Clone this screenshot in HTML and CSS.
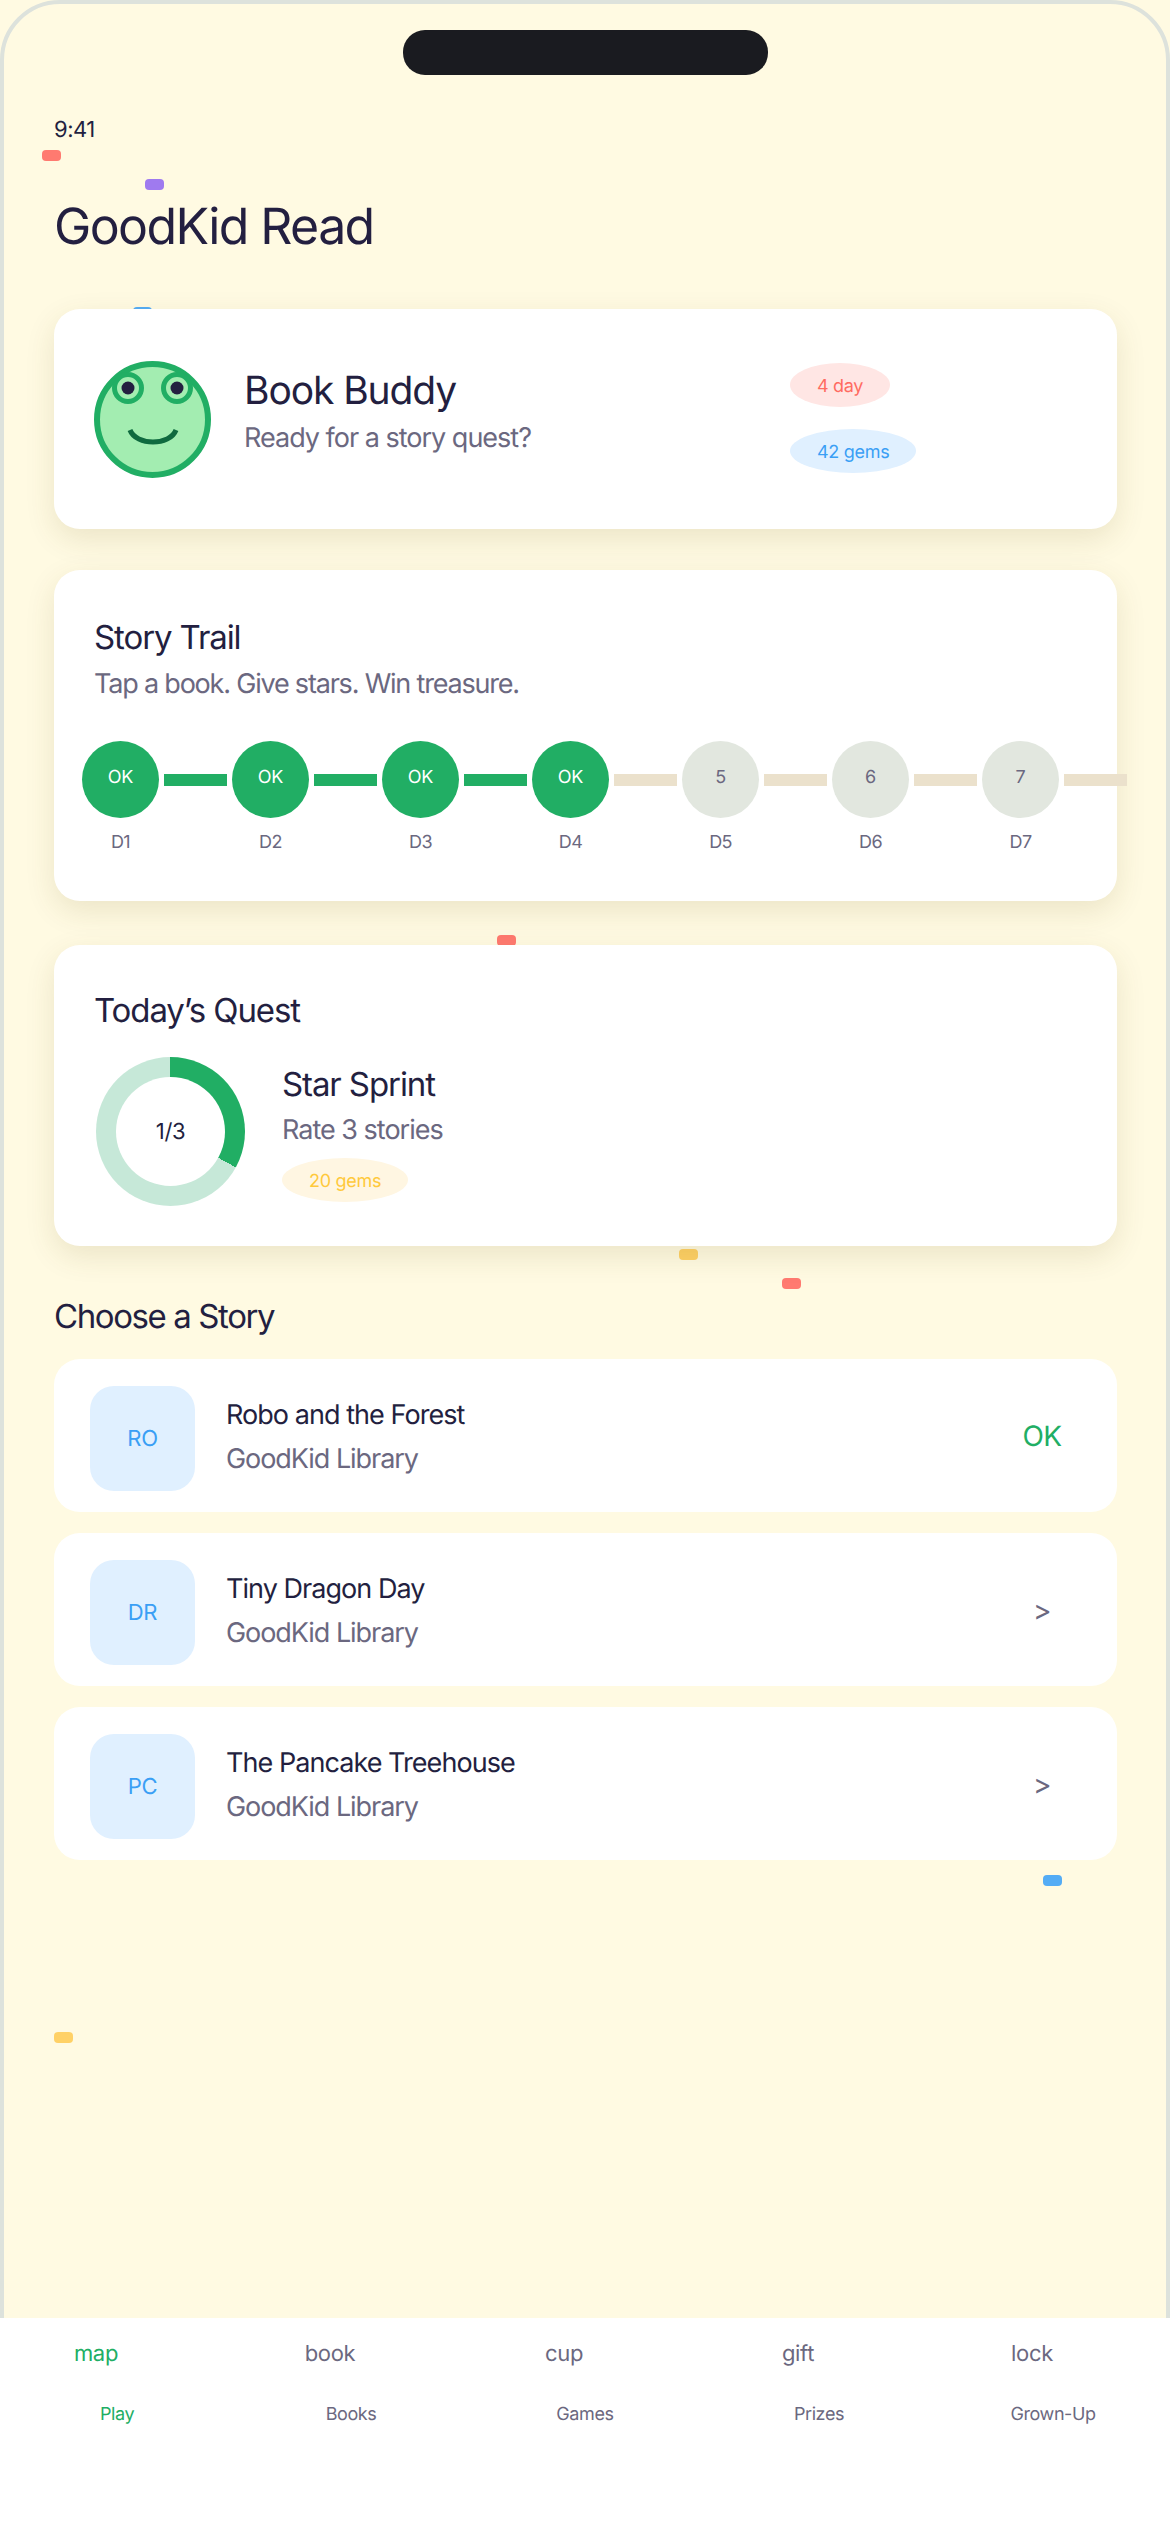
FILE: index.html
```html
<!DOCTYPE html>
<html lang="en">
<head>
<meta charset="utf-8">
<title>GoodKid Read</title>
<link rel="stylesheet" href="styles.css">
</head>
<body>
<div class="phone">
  <i class="bit bit-red b1"></i>
  <i class="bit bit-purple b2"></i>
  <i class="bit bit-blue b3"></i>
  <i class="bit bit-red b4"></i>
  <i class="bit bit-yellow b5"></i>
  <i class="bit bit-red b6"></i>
  <i class="bit bit-blue b7"></i>
  <i class="bit bit-yellow b8"></i>

  <main class="screen">
    <div class="island"></div>
    <div class="time">9:41</div>
    <h1 class="title">GoodKid Read</h1>

    <section class="card buddy">
      <div class="frog">
        <svg viewBox="0 0 117 117" width="117" height="117">
          <circle cx="58.5" cy="58.5" r="55.5" fill="#a3edb1" stroke="#21ae64" stroke-width="6"/>
          <circle cx="34" cy="27" r="13.5" fill="#a3edb1" stroke="#21ae64" stroke-width="5"/>
          <circle cx="83" cy="27" r="13.5" fill="#a3edb1" stroke="#21ae64" stroke-width="5"/>
          <circle cx="34" cy="27" r="6.5" fill="#231f40"/>
          <circle cx="83" cy="27" r="6.5" fill="#231f40"/>
          <path d="M36 69 C42 85 76 85 82 69" fill="none" stroke="#0f6a3f" stroke-width="5"/>
        </svg>
      </div>
      <div class="buddy-text">
        <h2 class="buddy-name">Book Buddy</h2>
        <p class="sub">Ready for a story quest?</p>
      </div>
      <div class="pills">
        <span class="pill pill-red">4 day</span>
        <span class="pill pill-blue">42 gems</span>
      </div>
    </section>

    <section class="card trail">
      <h2 class="head">Story Trail</h2>
      <p class="sub trail-sub">Tap a book. Give stars. Win treasure.</p>
      <div class="track">
        <div class="step"><div class="dot dot-done">OK</div><span class="day">D1</span></div><div class="link link-done"></div>
        <div class="step"><div class="dot dot-done">OK</div><span class="day">D2</span></div><div class="link link-done"></div>
        <div class="step"><div class="dot dot-done">OK</div><span class="day">D3</span></div><div class="link link-done"></div>
        <div class="step"><div class="dot dot-done">OK</div><span class="day">D4</span></div><div class="link"></div>
        <div class="step"><div class="dot">5</div><span class="day">D5</span></div><div class="link"></div>
        <div class="step"><div class="dot">6</div><span class="day">D6</span></div><div class="link"></div>
        <div class="step"><div class="dot">7</div><span class="day">D7</span></div><div class="link"></div>
      </div>
    </section>

    <section class="card quest">
      <h2 class="head">Today’s Quest</h2>
      <div class="quest-body">
        <div class="ring"><span class="ring-core">1/3</span></div>
        <div class="quest-text">
          <h3 class="head quest-name">Star Sprint</h3>
          <p class="sub quest-sub">Rate 3 stories</p>
          <span class="pill pill-yellow">20 gems</span>
        </div>
      </div>
    </section>

    <h2 class="head section-title">Choose a Story</h2>
    <div class="stories">
      <article class="story">
        <div class="tile">RO</div>
        <div class="story-text"><h3 class="story-name">Robo and the Forest</h3><p class="story-by">GoodKid Library</p></div>
        <span class="mark mark-ok">OK</span>
      </article>
      <article class="story">
        <div class="tile">DR</div>
        <div class="story-text"><h3 class="story-name">Tiny Dragon Day</h3><p class="story-by">GoodKid Library</p></div>
        <span class="mark">&gt;</span>
      </article>
      <article class="story">
        <div class="tile">PC</div>
        <div class="story-text"><h3 class="story-name">The Pancake Treehouse</h3><p class="story-by">GoodKid Library</p></div>
        <span class="mark">&gt;</span>
      </article>
    </div>
  </main>

  <nav class="tabs">
    <div class="tab tab-on"><span class="tab-icon">map</span><span class="tab-label">Play</span></div>
    <div class="tab"><span class="tab-icon">book</span><span class="tab-label">Books</span></div>
    <div class="tab"><span class="tab-icon">cup</span><span class="tab-label">Games</span></div>
    <div class="tab"><span class="tab-icon">gift</span><span class="tab-label">Prizes</span></div>
    <div class="tab"><span class="tab-icon">lock</span><span class="tab-label">Grown-Up</span></div>
  </nav>
</div>
</body>
</html>
```
FILE: styles.css
```css
* { box-sizing: border-box; margin: 0; padding: 0; }
html, body { background: #fffae2; }
body { font-family: Inter, "Liberation Sans", sans-serif; color: #231f40; text-rendering: geometricPrecision; }

.phone {
  position: relative;
  width: 1170px;
  height: 2532px;
  display: flex;
  flex-direction: column;
  overflow: hidden;
}
.phone::before {
  content: "";
  position: absolute;
  inset: 0;
  border: 4px solid #dde2dc;
  border-radius: 60px;
}

.bit { position: absolute; width: 19px; height: 11px; border-radius: 4px; }
.bit-red { background: #ff7a70; }
.bit-purple { background: #9f7aef; }
.bit-blue { background: #54acf5; }
.bit-yellow { background: #ffd166; }
.b1 { left: 42px; top: 150px; }
.b2 { left: 145px; top: 179px; }
.b3 { left: 133px; top: 307px; }
.b4 { left: 497px; top: 935px; }
.b5 { left: 679px; top: 1249px; }
.b6 { left: 782px; top: 1278px; }
.b7 { left: 1043px; top: 1875px; }
.b8 { left: 54px; top: 2032px; }

.screen {
  position: relative;
  flex: 1;
  padding: 30px 53px 0 54px;
  display: flex;
  flex-direction: column;
}
.island {
  align-self: center;
  width: 365px;
  height: 45px;
  border-radius: 22px;
  background: #1a1b20;
}
.time { margin-top: 42px; height: 25px; font-size: 22px; line-height: 26px; letter-spacing: -0.5px; }
.title { margin-top: 54px; height: 61px; font-size: 50px; line-height: 63px; font-weight: 400; letter-spacing: -1.6px; }

.card {
  position: relative;
  background: #fff;
  border-radius: 26px;
  box-shadow: 0 10px 30px rgba(90, 70, 10, 0.12);
}
.buddy { margin-top: 52px; height: 220px; display: flex; align-items: center; padding: 0 40px; }
.frog { width: 117px; height: 117px; flex: none; }
.frog svg { display: block; }
.buddy-text { flex: 1; margin-left: 33px; padding-bottom: 16px; }
.buddy-name { font-size: 39px; line-height: 48px; font-weight: 400; letter-spacing: -1.1px; }
.sub { margin-top: 6px; font-size: 27px; line-height: 34px; color: #6b6880; letter-spacing: -1px; }
.pills { flex: 0 0 287px; display: flex; flex-direction: column; align-items: flex-start; gap: 22px; padding-bottom: 2px; }
.pill { display: inline-block; height: 44px; padding: 0 27px; border-radius: 50%; font-size: 18px; line-height: 47px; letter-spacing: -0.3px; }
.pill-red { background: #ffe6e4; color: #ff6b61; }
.pill-blue { background: #e0f0ff; color: #3a9ff5; }
.pill-yellow { background: #fff6e2; color: #ffc93c; }

.head { font-size: 33px; line-height: 40px; font-weight: 400; letter-spacing: -1.1px; }
.trail { margin-top: 41px; height: 331px; padding: 47px 40px 0; }
.trail-sub { margin-top: 10px; letter-spacing: -1.2px; }
.track { display: flex; align-items: flex-start; gap: 5px; margin: 40px 0 0 -12px; }
.step { width: 77px; flex: none; display: flex; flex-direction: column; align-items: center; }
.dot { width: 77px; height: 77px; border-radius: 50%; background: #e2e7df; color: #6b6880; font-size: 18px; line-height: 73px; text-align: center; letter-spacing: -0.3px; }
.dot-done { background: #21ae64; color: #fff; }
.day { margin-top: 13px; font-size: 18px; line-height: 24px; color: #6b6880; letter-spacing: -0.6px; }
.link { width: 63px; height: 12px; flex: none; margin-top: 33px; background: #ebe1cc; }
.link-done { background: #21ae64; }

.quest { margin-top: 44px; height: 301px; padding: 45px 40px 0; }
.quest-body { display: flex; margin-top: 27px; padding-left: 2px; }
.ring {
  width: 149px;
  height: 149px;
  flex: none;
  border-radius: 50%;
  background: conic-gradient(#21ae64 0 33%, #c6e8d8 33% 100%);
  display: flex;
  align-items: center;
  justify-content: center;
}
.ring-core { width: 109px; height: 109px; border-radius: 50%; background: #fff; font-size: 22px; line-height: 111px; text-align: center; letter-spacing: -0.4px; }
.quest-text { margin-left: 37px; display: flex; flex-direction: column; align-items: flex-start; padding-top: 7px; }
.quest-sub { margin-top: 9px; }
.quest-text .pill { margin-top: 11px; }

.section-title { margin-top: 50px; letter-spacing: -1.4px; }
.stories { margin-top: 23px; display: flex; flex-direction: column; gap: 21px; }
.story { height: 153px; background: #fff; border-radius: 26px; display: flex; align-items: center; padding: 0 36px; }
.tile { width: 105px; height: 105px; flex: none; margin-top: 6px; border-radius: 24px; background: #e0f0ff; color: #3a9ff5; font-size: 22px; line-height: 107px; text-align: center; letter-spacing: -0.3px; }
.story-text { flex: 1; margin-left: 31px; padding-top: 2px; }
.story-name { font-size: 27px; line-height: 36px; font-weight: 400; letter-spacing: -0.95px; }
.story-by { margin-top: 8px; font-size: 27px; line-height: 36px; color: #6b6880; letter-spacing: -1.05px; }
.mark { width: 78px; text-align: center; font-size: 28px; color: #6b6880; letter-spacing: -0.5px; }
.mark-ok { color: #21ae64; }

.tabs { position: relative; height: 214px; background: #fff; display: flex; }
.tab { flex: 1; display: flex; flex-direction: column; align-items: center; padding-top: 21px; }
.tab-icon { padding-right: 42px; font-size: 22px; line-height: 30px; color: #6b6880; letter-spacing: -0.3px; }
.tab-label { margin-top: 34px; font-size: 18px; line-height: 24px; color: #6b6880; letter-spacing: -0.4px; }
.tab-on .tab-icon, .tab-on .tab-label { color: #21ae64; }
```
